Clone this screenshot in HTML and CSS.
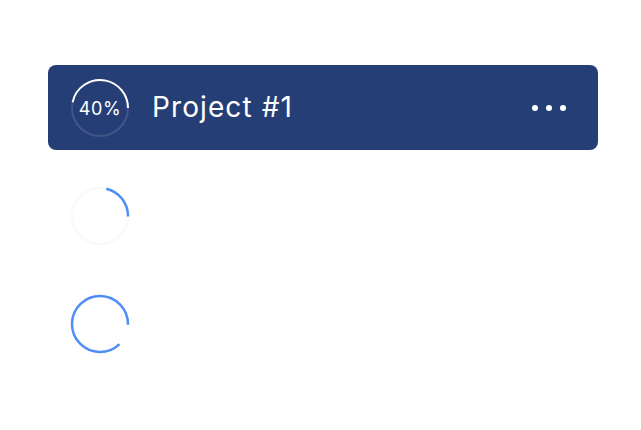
FILE: index.html
```html
<!DOCTYPE html>
<html lang="en">
<head>
  <meta charset="UTF-8" />
  <meta name="viewport" content="width=device-width, initial-scale=1.0" />
  <title>Projects</title>
  <link rel="stylesheet" href="styles.css">
</head>
<body>
  <main class="project-list">
    <div class="project-card">
      <div class="progress-ring">
        <svg width="60" height="60" viewBox="0 0 60 60">
          <circle class="ring-track" cx="30" cy="30" r="28" />
          <circle class="ring-value" cx="30" cy="30" r="28" stroke-dasharray="82 200" transform="rotate(192 30 30)" />
        </svg>
        <span class="progress-label">40%</span>
      </div>
      <div class="project-name">Project #1</div>
      <button class="more-btn" aria-label="More">
        <span class="dot"></span><span class="dot"></span><span class="dot"></span>
      </button>
    </div>
    <div class="project-row">
      <svg class="spinner" width="60" height="60" viewBox="0 0 60 60">
        <circle class="spinner-track" cx="30" cy="30" r="28" />
        <circle class="spinner-arc" cx="30" cy="30" r="28" stroke-dasharray="38 200" transform="rotate(283 30 30)" />
      </svg>
    </div>
    <div class="project-row">
      <svg class="spinner" width="60" height="60" viewBox="0 0 60 60">
        <circle class="spinner-arc" cx="30" cy="30" r="28" stroke-dasharray="154 200" transform="rotate(46 30 30)" />
      </svg>
    </div>
  </main>
</body>
</html>
```

FILE: styles.css
```css
:root {
  --brand-navy: #253f76;
  --brand-blue: #4f8ef6;
  --text-light: #ffffff;
  --bg-page: #ffffff;
  --radius-md: 8px;
  --font-primary: Inter, "Noto Sans", sans-serif;
}
body {
  margin: 0;
  background: var(--bg-page);
  font-family: var(--font-primary);
}
.project-list {
  display: flex;
  flex-direction: column;
  gap: 23px;
  width: 550px;
  padding: 65px 0 0 48px;
}
.project-card,
.project-row {
  height: 85px;
  display: flex;
  align-items: center;
  padding: 0 22px;
  box-sizing: border-box;
}
.project-card {
  background: var(--brand-navy);
  border-radius: var(--radius-md);
  color: var(--text-light);
}
.progress-ring {
  position: relative;
  width: 60px;
  height: 60px;
  flex-shrink: 0;
}
.progress-ring svg {
  display: block;
}
.ring-track {
  fill: none;
  stroke: rgba(255, 255, 255, 0.12);
  stroke-width: 2;
}
.ring-value {
  fill: none;
  stroke: var(--text-light);
  stroke-width: 2;
}
.progress-label {
  position: absolute;
  inset: 0;
  display: flex;
  align-items: center;
  justify-content: center;
  font-size: 18px;
  letter-spacing: 0.6px;
  padding-top: 1px;
}
.project-name {
  flex: 1;
  margin-left: 22px;
  font-size: 28px;
  letter-spacing: 1.1px;
  line-height: 1;
  padding-bottom: 1px;
}
.more-btn {
  display: flex;
  gap: 8px;
  background: none;
  border: none;
  padding: 0;
  margin-right: 10px;
  cursor: pointer;
}
.dot {
  width: 6px;
  height: 6px;
  border-radius: 50%;
  background: var(--text-light);
}
.spinner {
  display: block;
}
.spinner-track {
  fill: none;
  stroke: #fafafa;
  stroke-width: 2.5;
}
.spinner-arc {
  fill: none;
  stroke: var(--brand-blue);
  stroke-width: 2.5;
}
```
